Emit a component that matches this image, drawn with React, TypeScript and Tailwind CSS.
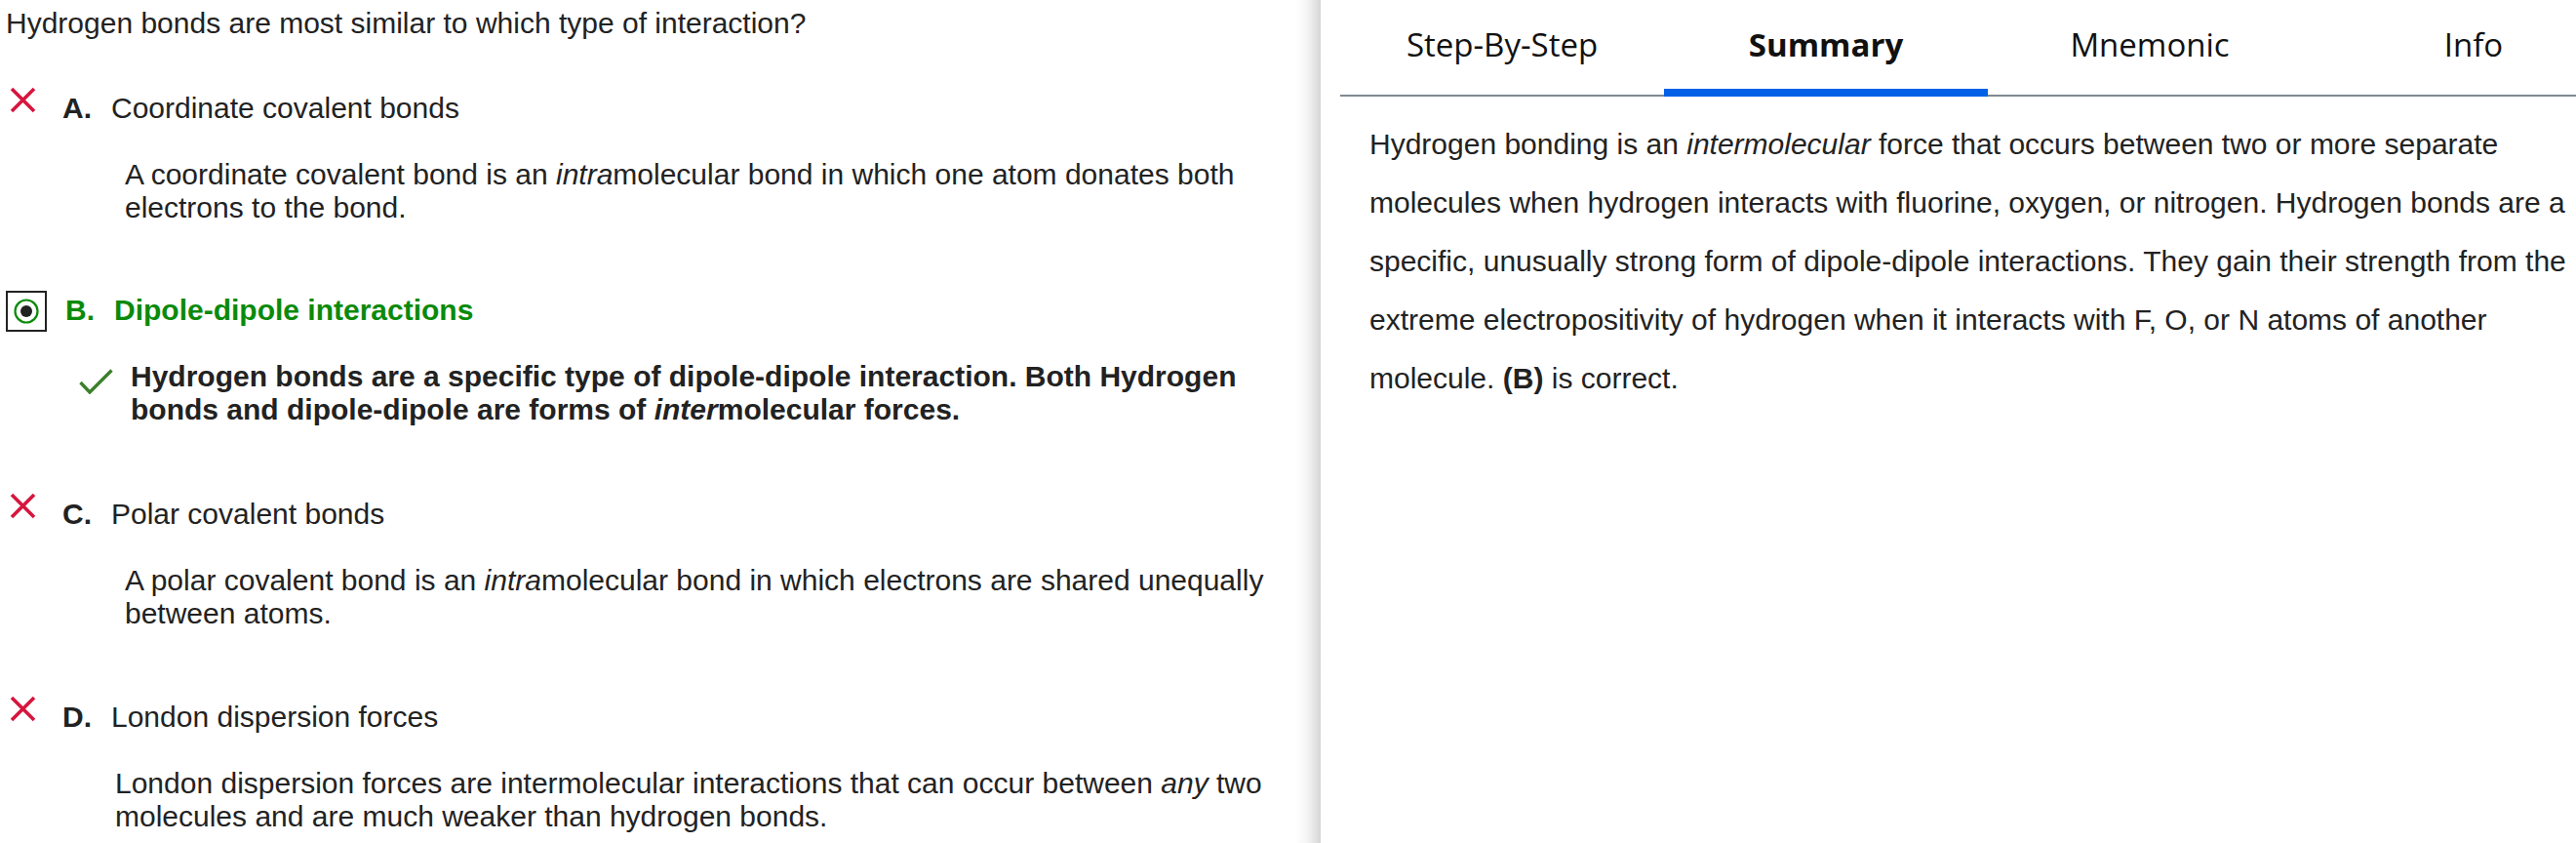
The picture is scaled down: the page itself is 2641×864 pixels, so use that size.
import React from "react";

function CrossIcon() {
  return (
    <svg viewBox="0 0 27 27" className="ml-[4px] mr-[27px] w-[27px] h-[27px] shrink-0 self-start -mt-[2px]">
      <path d="M2 2 L25 25 M25 2 L2 25" stroke="#d6163e" strokeWidth="3.6" strokeLinecap="butt" fill="none" />
    </svg>
  );
}

function RadioChecked() {
  return (
    <div className="mr-[19px] w-[42px] h-[42px] shrink-0 border-2 border-[#222] flex items-center justify-center">
      <svg viewBox="0 0 26 26" className="w-[26px] h-[26px]">
        <circle cx="13" cy="13" r="11.5" stroke="#0a8a0a" strokeWidth="2.2" fill="white" />
        <circle cx="13" cy="13" r="6" fill="#222" />
      </svg>
    </div>
  );
}

function CheckIcon() {
  return (
    <svg viewBox="0 0 35 26" className="w-[35px] h-[26px] shrink-0 mt-[9px]">
      <path d="M1.5 14 L11 24 L33.5 1.5" stroke="#3c7f2d" strokeWidth="3.4" fill="none" />
    </svg>
  );
}

export default function App() {
  return (
    <div className="flex h-[864px] w-[2641px] overflow-hidden bg-white font-['Liberation_Sans',Arial,sans-serif] text-[#222]">
      {/* ── Question / answers ── */}
      <div className="flex w-[1354px] shrink-0">
        <div className="flex-1 pl-[6px] text-[30px] leading-[34.5px]">
          <p className="pt-[7px]">Hydrogen bonds are most similar to which type of interaction?</p>

          {/* A */}
          <div className="mt-[49px]">
            <div className="flex items-center h-[42px]">
              <CrossIcon />
              <span className="w-[50px] font-bold">A.</span>
              <span>Coordinate covalent bonds</span>
            </div>
            <p className="mt-[29px] ml-[122px]">
              A coordinate covalent bond is an <i>intra</i>molecular bond in which one atom donates both electrons to the bond.
            </p>
          </div>

          {/* B */}
          <div className="mt-[67px]">
            <div className="flex items-center h-[42px] text-[#0a8a0a] font-bold">
              <RadioChecked />
              <span className="w-[50px]">B.</span>
              <span>Dipole-dipole interactions</span>
            </div>
            <div className="mt-[29px] ml-[75px] flex items-start">
              <CheckIcon />
              <p className="ml-[18px] font-bold">
                Hydrogen bonds are a specific type of dipole-dipole interaction. Both Hydrogen bonds and dipole-dipole are forms of <i>inter</i>molecular forces.
              </p>
            </div>
          </div>

          {/* C */}
          <div className="mt-[69px]">
            <div className="flex items-center h-[42px]">
              <CrossIcon />
              <span className="w-[50px] font-bold">C.</span>
              <span>Polar covalent bonds</span>
            </div>
            <p className="mt-[29px] ml-[122px]">
              A polar covalent bond is an <i>intra</i>molecular bond in which electrons are shared unequally between atoms.
            </p>
          </div>

          {/* D */}
          <div className="mt-[68px]">
            <div className="flex items-center h-[42px]">
              <CrossIcon />
              <span className="w-[50px] font-bold">D.</span>
              <span>London dispersion forces</span>
            </div>
            <p className="mt-[29px] ml-[112px]">
              London dispersion forces are intermolecular interactions that can occur between <i>any</i> two molecules and are much weaker than hydrogen bonds.
            </p>
          </div>
        </div>
        <div className="w-[26px] shrink-0 bg-[linear-gradient(to_right,rgba(0,0,0,0)_0%,rgba(0,0,0,0.04)_45%,rgba(0,0,0,0.16)_100%)]" />
      </div>

      {/* ── Explanation panel ── */}
      <div className="w-[1348px] shrink-0 pl-[20px]">
        <div className="flex border-b-2 border-[#7f8a92] font-['Open_Sans',sans-serif] text-[33px] leading-[45px] text-[#111]">
          <div className="w-[332px] h-[97px] pt-[23px] text-center">Step-By-Step</div>
          <div className="relative w-[332px] h-[97px] pt-[23px] text-center font-bold">
            Summary
            <div className="absolute left-0 right-0 -bottom-[2px] h-[8px] bg-[#0061e6]" />
          </div>
          <div className="w-[332px] h-[97px] pt-[23px] text-center">Mnemonic</div>
          <div className="w-[332px] h-[97px] pt-[23px] text-center">Info</div>
        </div>
        <p className="pl-[30px] pr-[42px] pt-[19px] text-[30px] leading-[60px]">
          Hydrogen bonding is an <i>intermolecular</i> force that occurs between two or more separate molecules when hydrogen interacts with fluorine, oxygen, or nitrogen. Hydrogen bonds are a specific, unusually strong form of dipole-dipole interactions. They gain their strength from the extreme electropositivity of hydrogen when it interacts with F, O, or N atoms of another molecule. <b>(B)</b> is correct.
        </p>
      </div>
    </div>
  );
}
